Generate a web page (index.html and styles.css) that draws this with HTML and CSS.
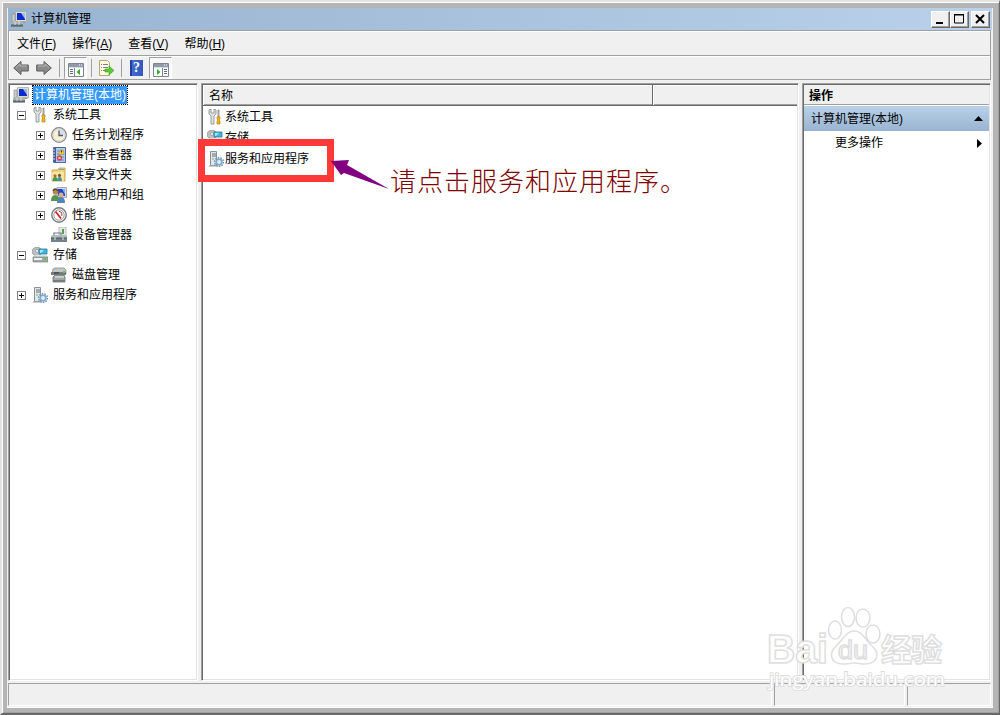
FILE: index.html
```html
<!DOCTYPE html>
<html lang="zh-CN">
<head>
    <meta charset="UTF-8">
    <title>计算机管理</title>
    <link rel="stylesheet" href="styles.css">
</head>
<body>
    <!-- Icon set -->
    <svg class="defs" width="0" height="0">
        <symbol id="computer" viewBox="0 0 16 16">
            <path d="M4.500.5h11v10h-11z" fill="#dcdccb" stroke="#aaa99b" stroke-width=".8"/>
            <path d="M6 2h8v7H6z" fill="#0a2ad2"/>
            <path d="M10 2h4v6z" fill="#9fb8ff"/>
            <path d="M1 3h3v8H1z" fill="#c9ced0" stroke="#7d8588" stroke-width=".6"/>
            <path d="M8 11h6l1 1H8z" fill="#999"/>
            <path d="M0 11h12v4H0z" fill="#7b8488"/>
            <path d="M0 12h12M4 10v4M8 10v4" stroke="#d9dfe1"/>
            <path d="M0 15h12" stroke="#454c50"/>
        </symbol>
        <symbol id="tools" viewBox="0 0 16 16">
            <path d="M2 1v4l2 2v8h3V7l2-2V1L7 0v4H4V0z" fill="#e1e3e3" stroke="#82888a" stroke-width=".8"/>
            <path d="M11 1h1v7h-1z" fill="#ddd" stroke="#777" stroke-width=".7"/>
            <path d="M10 8h3v2l-1 1 1 1v3h-3v-3l1-1-1-1z" fill="#f4b619" stroke="#b9810a" stroke-width=".7"/>
        </symbol>
        <symbol id="clock" viewBox="0 0 16 16">
            <circle cx="8" cy="8" r="7.3" fill="#f5efd8" stroke="#85898c" stroke-width="1.3"/>
            <path d="M8 8V2a6 6 0 0 1 6 6z" fill="#cfe0f3"/>
            <circle cx="8" cy="8" r="6" fill="none" stroke="#d2d3cd" stroke-width=".8"/>
            <path d="M8 3.5V8.5h4" fill="none" stroke="#585858" stroke-width="1.3"/>
        </symbol>
        <symbol id="events" viewBox="0 0 16 16">
            <path d="M2.5.5h12v15h-12z" fill="#b5c9ec" stroke="#4967a5"/>
            <path d="M3 1h2v14H3z" fill="#3f5d9d"/>
            <path d="M6 4h7M6 7h7M6 10h7M6 13h7" stroke="#6986bc"/>
            <path d="M1 3h3M1 6h3M1 9h3M1 12h3" stroke="#ddd"/>
            <path d="M10.500 2l3 5h-6z" fill="#ffdc25" stroke="#bb960d" stroke-width=".6"/>
            <path d="M10.500 3.500v2" stroke="#333"/>
            <circle cx="8.500" cy="11" r="2.700" fill="#d84149"/>
            <path d="M7.400 9.900l2.200 2.200M9.600 9.900l-2.200 2.200" stroke="#fff" stroke-width=".8"/>
        </symbol>
        <symbol id="share" viewBox="0 0 16 16">
            <path d="M1 3h6l1-2h6v13H1z" fill="#f2d477" stroke="#c19b39" stroke-width=".8"/>
            <path d="M8 2.5h5" stroke="#5daee0"/>
            <path d="M1 5h12v9H1z" fill="#f9e49b"/>
            <circle cx="4" cy="8.800" r="1.600" fill="#a46d3d"/>
            <circle cx="8.500" cy="8.400" r="1.600" fill="#77583d"/>
            <path d="M1.500 14q0-4 2.500-4t2.500 4z" fill="#3f9956"/>
            <path d="M6 14q0-4 2.500-4t2.500 4z" fill="#3f97a4"/>
        </symbol>
        <symbol id="users" viewBox="0 0 16 16">
            <path d="M6 .5h9.5v10H6z" fill="#d4d9e4" stroke="#a4aab6"/>
            <path d="M7 2h7v7H7z" fill="#1f44c7"/>
            <path d="M11 2h3v5z" fill="#8caaf4"/>
            <circle cx="4.5" cy="5" r="2.8" fill="#b98852"/>
            <circle cx="10" cy="8" r="2.5" fill="#d7b087"/>
            <path d="M0 14q0-6 4-6t5 6z" fill="#569450"/>
            <path d="M6 16q0-6 4-6t4 6z" fill="#5483b7"/>
            <path d="M2 4q2-4 5 0" fill="none" stroke="#604421" stroke-width="1.4"/>
        </symbol>
        <symbol id="perf" viewBox="0 0 16 16">
            <circle cx="8" cy="8" r="7.2" fill="#fff" stroke="#777c7e" stroke-width="1.4"/>
            <circle cx="8" cy="8" r="5.200" fill="none" stroke="#9ba0a1"/>
            <path d="M4.500 4.500l5.500 7" stroke="#d6232d" stroke-width="1.800"/>
            <path d="M8 4.200l2.800 1.600v3" fill="none" stroke="#c43138"/>
        </symbol>
        <symbol id="device" viewBox="0 0 16 16">
            <path d="M8 0h7v9H8z" fill="#e5eae6" stroke="#a9b1ac" stroke-width=".8"/>
            <path d="M11 2h2v5h-2z" fill="#5b9b54"/>
            <path d="M3 8V6h7v2" fill="none" stroke="#6c7b80" stroke-width="1.2"/>
            <path d="M0 9l2-1h12l2 1v3H0z" fill="#aebcc0"/>
            <path d="M0 11h16v4H0z" fill="#728288"/>
            <path d="M0 11h16" stroke="#48565c"/>
            <path d="M4 10v3M12 10v3" stroke="#dfe7e8"/>
        </symbol>
        <symbol id="storage" viewBox="0 0 16 16">
            <ellipse cx="5" cy="4.5" rx="5" ry="4.3" fill="#bac1c1" stroke="#838b8b" stroke-width=".7"/>
            <circle cx="5" cy="4" r="1.5" fill="#fff" stroke="#888" stroke-width=".7"/>
            <path d="M7 2h8v5H7z" fill="#42b4dd" stroke="#26799f" stroke-width=".8"/>
            <path d="M8 3h4L9 6H8z" fill="#a8e4f5"/>
            <path d="M1 10l2-2h11l2 2z" fill="#dce0e0"/>
            <path d="M1 10h15v5H1z" fill="#9da8a8" stroke="#727b7b" stroke-width=".6"/>
            <path d="M2 12h8" stroke="#f0f3f3" stroke-width="2"/>
            <path d="M12 11h2v2h-2z" fill="#43d923"/>
        </symbol>
        <symbol id="disk" viewBox="0 0 16 16">
            <path d="M2 2l2-1h9l2 2v4H1z" fill="#c2c5c5" stroke="#8b8f8f" stroke-width=".8"/>
            <path d="M0 5h15v3H0z" fill="#777b7c"/>
            <path d="M3 6h5" stroke="#292c49"/>
            <path d="M12 4h2v2h-2z" fill="#66c84e"/>
            <path d="M2 10l2-2h9l1 2v5H2z" fill="#a3a5a5" stroke="#6e7272" stroke-width=".8"/>
            <path d="M4 10h9" stroke="#f2f2f2"/>
            <path d="M2 13h12v2H2z" fill="#777b7c"/>
        </symbol>
        <symbol id="services" viewBox="0 0 16 16">
            <path d="M2.5.5h6v14h-6z" fill="#e1e5e6" stroke="#8b9495"/>
            <path d="M4 3h4M4 5h4" stroke="#657174"/>
            <path d="M4 8h2" stroke="#5ebf55"/>
            <path d="M1 15h9" stroke="#9ba3a4"/>
            <circle cx="11" cy="11" r="4.4" fill="none" stroke="#6a91b3" stroke-width="1.4" stroke-dasharray="1.5 1.2"/>
            <circle cx="11" cy="11" r="2.8" fill="#e1effa" stroke="#7fa8ca" stroke-width="1.7"/>
        </symbol>
        <symbol id="arrow" viewBox="0 0 16 16">
            <path d="M.7 8L8 1.5V5h7.3v6H8v3.5z" fill="#8b8b8b" stroke="#5d5d5d"/>
            <path d="M3 7.5L7 4v2h7" fill="none" stroke="#b7b7b7"/>
        </symbol>
        <symbol id="pane" viewBox="0 0 16 14">
            <path d="M.5.5h15v13H.5z" fill="#fff" stroke="#7b8692"/>
            <path d="M1 1h14v3H1z" fill="#8d9baa"/>
            <path d="M11 2h1M13 2h1" stroke="#fff"/>
            <path d="M1 4.5h14" stroke="#d9dee4"/>
        </symbol>
    </svg>

    <div class="window">
        <div class="titlebar">
            <svg class="icon"><use href="#computer"/></svg>
            <span class="title">计算机管理</span>
            <div class="btn"><svg width="17" height="15"><path d="M4 10h7v2H4z"/></svg></div>
            <div class="btn"><svg width="17" height="15"><path d="M3.5 3h9v8h-9zM3 2.5h10" fill="none" stroke="#000"/></svg></div>
            <div class="btn close"><svg width="17" height="15"><path d="M4 3l8 8M12 3l-8 8" stroke="#000" stroke-width="2"/></svg></div>
        </div>

        <div class="bars">
            <div class="menubar">
                <span>文件(<u>F</u>)</span>
                <span>操作(<u>A</u>)</span>
                <span>查看(<u>V</u>)</span>
                <span>帮助(<u>H</u>)</span>
            </div>
            <div class="toolbar">
                <svg class="icon"><use href="#arrow"/></svg>
                <svg class="icon forward"><use href="#arrow"/></svg>
                <i class="sep"></i>
                <div class="pressed">
                    <svg width="16" height="14"><use href="#pane"/><path d="M6.500 5v8" stroke="#7b8692"/><path d="M2 6.500h3M2 8.500h3M2 10.500h3" stroke="#607080"/><path d="M12 6v6L8.500 9z" fill="#35ae24"/></svg>
                </div>
                <i class="sep s2"></i>
                <svg class="icon" viewBox="0 0 16 16"><path d="M1.500.5h8l2 2v13h-10z" fill="#fffbe0" stroke="#b4a777"/><path d="M3 4.500h1M3 7.500h1M3 10.500h1M5 4.500h5M5 7.500h5M5 10.500h4" stroke="#7d7d8d"/><path d="M7 9h4V6l5 4.500-5 4.500v-3H7z" fill="#5ccc35" stroke="#3b9d20" stroke-width=".6"/></svg>
                <i class="sep s3"></i>
                <div class="help">?</div>
                <div class="pressed">
                    <svg width="16" height="14"><use href="#pane"/><path d="M9.500 5v8" stroke="#7b8692"/><path d="M11 6.500h3M11 8.500h3M11 10.500h3" stroke="#607080"/><path d="M4 6v6l3.500-3z" fill="#35ae24"/></svg>
                </div>
            </div>
        </div>

        <div class="panes">
            <div class="pane tree">
                <div class="row"><svg class="icon"><use href="#computer"/></svg><span class="selected">计算机管理(本地)</span></div>
                <div class="row l1"><i class="box"></i><svg class="icon"><use href="#tools"/></svg><span>系统工具</span></div>
                <div class="row l2"><i class="box plus"></i><svg class="icon"><use href="#clock"/></svg><span>任务计划程序</span></div>
                <div class="row l2"><i class="box plus"></i><svg class="icon"><use href="#events"/></svg><span>事件查看器</span></div>
                <div class="row l2"><i class="box plus"></i><svg class="icon"><use href="#share"/></svg><span>共享文件夹</span></div>
                <div class="row l2"><i class="box plus"></i><svg class="icon"><use href="#users"/></svg><span>本地用户和组</span></div>
                <div class="row l2"><i class="box plus"></i><svg class="icon"><use href="#perf"/></svg><span>性能</span></div>
                <div class="row l2 leaf"><svg class="icon"><use href="#device"/></svg><span>设备管理器</span></div>
                <div class="row l1"><i class="box"></i><svg class="icon"><use href="#storage"/></svg><span>存储</span></div>
                <div class="row l2 leaf"><svg class="icon"><use href="#disk"/></svg><span>磁盘管理</span></div>
                <div class="row l1"><i class="box plus"></i><svg class="icon"><use href="#services"/></svg><span>服务和应用程序</span></div>
            </div>

            <div class="pane list">
                <div class="columns"><div class="col name">名称</div><div class="col"></div></div>
                <div class="item"><svg class="icon"><use href="#tools"/></svg>系统工具</div>
                <div class="item"><svg class="icon"><use href="#storage"/></svg>存储</div>
                <div class="item"><svg class="icon"><use href="#services"/></svg>服务和应用程序</div>
            </div>

            <div class="pane actions">
                <div class="actions-head">操作</div>
                <div class="group"><span>计算机管理(本地)</span><svg width="9" height="5"><path d="M0 5L4.500 0 9 5z"/></svg></div>
                <div class="more"><span>更多操作</span><svg width="5" height="9"><path d="M0 0l5 4.500L0 9z"/></svg></div>
            </div>
        </div>

        <div class="statusbar"><div></div><div></div><div></div></div>
    </div>

    <!-- Callout -->
    <div class="highlight"><svg class="icon"><use href="#services"/></svg>服务和应用程序</div>
    <svg class="pointer" width="60" height="32"><path d="M0 3L18 2 16 7 58 31 13 15 10 17z" fill="#800080"/></svg>
    <div class="note">请点击服务和应用程序。</div>

    <svg class="watermark" width="190" height="110">
        <g class="mark">
            <text x="2" y="68" font-size="40" textLength="61" lengthAdjust="spacingAndGlyphs">Bai</text>
            <ellipse cx="70" cy="35" rx="6.500" ry="9"/>
            <ellipse cx="83" cy="22" rx="6.500" ry="9.500"/>
            <ellipse cx="98" cy="23" rx="7" ry="9"/>
            <ellipse cx="108" cy="39" rx="7" ry="9"/>
            <path d="M89 36c9 0 11 9 18 15 9 8 5 18-7 18-5 0-7-1-11-1s-6 1-11 1c-12 0-15-10-7-18 7-6 10-15 18-15z"/>
            <text class="du" x="73" y="64" font-size="25" textLength="30" lengthAdjust="spacingAndGlyphs">du</text>
            <text class="cjk" x="116" y="66" font-size="31" textLength="61">经验</text>
            <text class="url" x="4" y="91" font-size="19" textLength="176" lengthAdjust="spacingAndGlyphs">jingyan.baidu.com</text>
        </g>
    </svg>
</body>
</html>
```

FILE: styles.css
```css
* {
    box-sizing: border-box;
}
body {
    margin: 0;
    width: 1000px;
    height: 715px;
    overflow: hidden;
    position: relative;
    font: 12px/20px "Liberation Sans", "Noto Sans CJK SC", sans-serif;
    color: #000;
}
svg {
    display: block;
    flex: none;
}
.defs {
    position: absolute;
}
.icon {
    width: 16px;
    height: 16px;
}
.window {
    height: 715px;
    padding: 6px 6px 5px 5px;
    display: flex;
    flex-direction: column;
    background: #b4b4b4;
    border: 2px solid #696969;
    border-top-color: #e3e3e3;
    border-left-color: #e3e3e3;
    border-right-width: 1px;
    box-shadow: inset 1px 1px #fff, inset -1px -1px #a0a0a0;
}

/* Title bar */
.titlebar {
    height: 22px;
    flex: none;
    display: flex;
    align-items: center;
    padding: 0 2px 0 3px;
    background: linear-gradient(to right, #99b4d1, #b9d1ea);
    border-left: 1px solid #f0f0f0;
    border-right: 1px solid #f0f0f0;
}
.title {
    flex: 1;
    margin-left: 4px;
}
.btn {
    width: 19px;
    height: 17px;
    background: #f0f0f0;
    border: 1px solid #696969;
    border-top-color: #fff;
    border-left-color: #fff;
    box-shadow: inset -1px -1px #a0a0a0;
}
.close {
    margin-left: 2px;
}

/* Menu and toolbar */
.bars {
    height: 53px;
    flex: none;
    background: #f0f0f0;
    padding: 0 2px 3px 1px;
}
.menubar,
.toolbar {
    display: flex;
    border: 1px solid #a0a0a0;
    box-shadow: inset 1px 1px #fff;
}
.menubar {
    height: 26px;
    padding: 3px 8px;
    gap: 16px;
}
.toolbar {
    height: 24px;
    border-top: 0;
    padding-left: 4px;
    align-items: center;
}
.forward {
    transform: scaleX(-1);
    margin-left: 7px;
}
.sep {
    width: 1px;
    height: 18px;
    background: #a0a0a0;
    margin: 0 4px 0 7px;
}
.s2 {
    margin: 0 6px 0 4px;
}
.s3 {
    margin: 0 8px 0 7px;
}
.pressed {
    width: 23px;
    height: 22px;
    padding: 5px 0 0 3px;
    background: #f8f8f8;
    border: 1px solid #a0a0a0;
    border-right-color: #fff;
    border-bottom-color: #fff;
}
.help {
    width: 13px;
    height: 16px;
    margin-right: 6px;
    background: linear-gradient(to right, #263f9a 2px, #426bd2 2px, #3358bd);
    color: #fff;
    font: bold 14px/16px "Liberation Serif", serif;
    text-align: center;
}

/* Panes */
.panes {
    height: 599px;
    flex: none;
    display: flex;
    gap: 3px;
    padding: 0 2px 0 1px;
    background: #f0f0f0;
}
.pane {
    height: 598px;
    background: #fff;
    border: 1px solid #a0a0a0;
    border-right-color: #fff;
    border-bottom-color: #fff;
    box-shadow: inset 1px 1px #696969, inset -1px -1px #e3e3e3;
}
.tree {
    width: 190px;
    padding: 1px 0 0 4px;
}
.row {
    height: 20px;
    display: flex;
    align-items: center;
}
.row span {
    margin-left: 5px;
    line-height: 18px;
}
.row .selected {
    background: #3399ff;
    color: #fff;
    outline: 1px dotted #000;
    padding: 0 1px;
    margin-left: 4px;
}
.l1 {
    padding-left: 4px;
}
.l2 {
    padding-left: 23px;
}
.leaf {
    padding-left: 38px;
}
.box {
    width: 9px;
    height: 9px;
    flex: none;
    margin-right: 6px;
    border: 1px solid #808080;
    background: linear-gradient(#000, #000) 1px 3px / 5px 1px no-repeat;
}
.plus {
    background: linear-gradient(#000, #000) 1px 3px / 5px 1px no-repeat,
                linear-gradient(#000, #000) 3px 1px / 1px 5px no-repeat;
}
.list {
    width: 598px;
    padding: 1px;
}
.columns {
    height: 21px;
    display: flex;
}
.col {
    flex: 1;
    background: #f0f0f0;
    border-bottom: 1px solid #696969;
    box-shadow: inset 1px 1px #fff, inset 0 -1px #a0a0a0;
}
.name {
    flex: 0 0 450px;
    padding-left: 6px;
    border-right: 1px solid #696969;
    line-height: 22px;
}
.item {
    height: 21px;
    display: flex;
    align-items: center;
    padding-left: 4px;
    gap: 2px;
}
.actions {
    flex: 1;
    padding: 1px 1px 0;
}
.actions-head {
    height: 20px;
    padding-left: 5px;
    background: #f0f0f0;
    border-bottom: 1px solid #a0a0a0;
    font-weight: bold;
    line-height: 22px;
}
.group {
    height: 26px;
    display: flex;
    align-items: center;
    justify-content: space-between;
    padding: 0 6px 0 7px;
    border-top: 1px solid #fff;
    background: linear-gradient(#b9d1ea, #99b4d1);
}
.more {
    height: 24px;
    display: flex;
    align-items: center;
    justify-content: space-between;
    padding: 0 7px 0 31px;
}

/* Status bar */
.statusbar {
    height: 26px;
    flex: none;
    display: flex;
    gap: 2px;
    padding: 1px 2px 1px 1px;
    background: #f0f0f0;
    border-bottom: 1px solid #fff;
}
.statusbar div {
    border: 1px solid #a0a0a0;
    border-right-color: #fff;
    border-bottom-color: #fff;
    width: 131px;
}
.statusbar div:first-child {
    width: 764px;
}
.statusbar div:last-child {
    flex: 1;
}

/* Callout drawn over the panes */
.highlight {
    position: absolute;
    left: 198px;
    top: 139px;
    width: 136px;
    height: 43px;
    border: 7px solid #ff3838;
    background: #fff;
    display: flex;
    align-items: center;
    gap: 1px;
    padding: 0 0 4px 3px;
}
.pointer {
    position: absolute;
    left: 331px;
    top: 158px;
}
.note {
    position: absolute;
    left: 390px;
    top: 161px;
    font: 300 26px/38px "Noto Sans CJK SC", sans-serif;
    letter-spacing: 1px;
    color: #800000;
    white-space: nowrap;
}
.watermark {
    position: absolute;
    left: 765px;
    top: 595px;
}
.mark {
    fill: #fff;
    stroke: #dedede;
    stroke-width: 1.5px;
    font-family: "Liberation Sans", sans-serif;
    font-weight: bold;
}
.mark .du {
    font-weight: normal;
}
.mark .cjk {
    font-family: "Noto Sans CJK SC", sans-serif;
}
.mark .url {
    stroke-width: 2px;
    paint-order: stroke;
    font-family: "Open Sans", sans-serif;
    font-weight: normal;
}
```
